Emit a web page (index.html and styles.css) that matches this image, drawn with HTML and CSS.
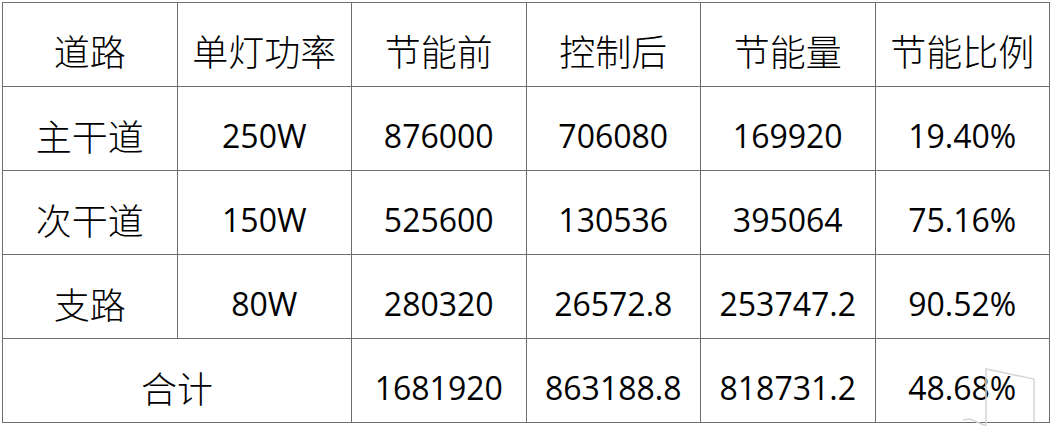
FILE: index.html
```html
<!DOCTYPE html>
<html lang="zh-CN">
<head>
<meta charset="utf-8">
<title>节能统计</title>
<link rel="stylesheet" href="styles.css">
</head>
<body>
<div class="page">
  <div class="grid">
    <div class="cell cjk head">道路</div>
    <div class="cell cjk head">单灯功率</div>
    <div class="cell cjk head">节能前</div>
    <div class="cell cjk head">控制后</div>
    <div class="cell cjk head">节能量</div>
    <div class="cell cjk head">节能比例</div>

    <div class="cell cjk">主干道</div>
    <div class="cell num">250W</div>
    <div class="cell num">876000</div>
    <div class="cell num">706080</div>
    <div class="cell num">169920</div>
    <div class="cell num">19.40%</div>

    <div class="cell cjk">次干道</div>
    <div class="cell num">150W</div>
    <div class="cell num">525600</div>
    <div class="cell num">130536</div>
    <div class="cell num">395064</div>
    <div class="cell num">75.16%</div>

    <div class="cell cjk">支路</div>
    <div class="cell num">80W</div>
    <div class="cell num">280320</div>
    <div class="cell num">26572.8</div>
    <div class="cell num">253747.2</div>
    <div class="cell num">90.52%</div>

    <div class="cell cjk span2">合计</div>
    <div class="cell num">1681920</div>
    <div class="cell num">863188.8</div>
    <div class="cell num">818731.2</div>
    <div class="cell num">48.68%</div>
  </div>
  <svg class="mark" width="90" height="60" viewBox="0 0 90 60" xmlns="http://www.w3.org/2000/svg">
    <polyline points="26,60 26,3 74,13 74,56" fill="none" stroke="#d6d6d6" stroke-width="1.5"/>
    <polyline points="3,54 10,53 26,60" fill="none" stroke="#d6d6d6" stroke-width="1.5"/>
  </svg>
</div>
</body>
</html>
```

FILE: styles.css
```css
html, body {
  margin: 0;
  padding: 0;
  background: #ffffff;
}

.page {
  position: relative;
  width: 1052px;
  height: 426px;
  overflow: hidden;
  padding: 2px 0 0 2px;
  box-sizing: border-box;
}

.grid {
  display: grid;
  width: 1048px;
  grid-template-columns: repeat(6, 1fr);
  grid-template-rows: repeat(5, 83px);
  gap: 1px;
  padding: 1px;
  box-sizing: border-box;
  background: #6e6e6e;
}

.cell {
  background: #ffffff;
  display: flex;
  align-items: center;
  justify-content: center;
  padding-top: 13px;
  box-sizing: border-box;
  color: #000000;
  line-height: 1;
  white-space: nowrap;
}

.cjk {
  font-family: "Noto Sans CJK SC", "Noto Sans", sans-serif;
  font-size: 36px;
  font-weight: 300;
}

.cjk.head {
  padding-top: 10px;
}

.num {
  font-family: "Open Sans", "Noto Sans CJK SC", sans-serif;
  font-size: 32px;
  padding-top: 15px;
}

.span2 {
  grid-column: span 2;
}

.mark {
  position: absolute;
  left: 960px;
  top: 366px;
}
```
